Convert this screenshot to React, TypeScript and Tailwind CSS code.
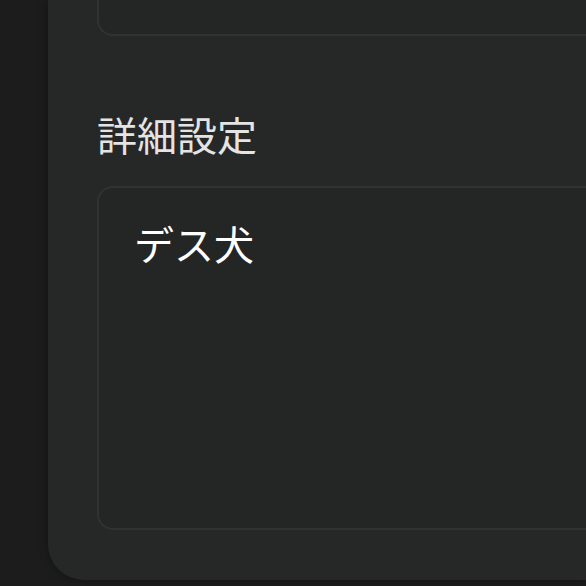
export default function App() {
  return (
    <div
      className="h-[586px] w-[586px] overflow-hidden bg-[#1c1c1c]"
      style={{ fontFamily: '"Noto Sans CJK JP", "Noto Sans", sans-serif' }}
    >
      <div className="ml-[48px] flex h-[580px] flex-col rounded-bl-[36px] bg-[#262828] pb-[50px] pl-[49px] shadow-[0_0_10px_rgba(0,0,0,0.35)]">
        <div className="h-[36px] shrink-0 rounded-bl-[16px] border-b-2 border-l-2 border-[#303333] bg-[#242525]" />
        <h2 className="mt-[74px] text-[40px] leading-[48px] text-[#e4e4e4]">詳細設定</h2>
        <div className="mt-[28px] flex-1 rounded-l-[16px] border-2 border-r-0 border-[#303333] bg-[#242525] pl-[35px] pt-[31px]">
          <p className="text-[40px] leading-[48px] text-white">デス犬</p>
        </div>
      </div>
    </div>
  );
}
